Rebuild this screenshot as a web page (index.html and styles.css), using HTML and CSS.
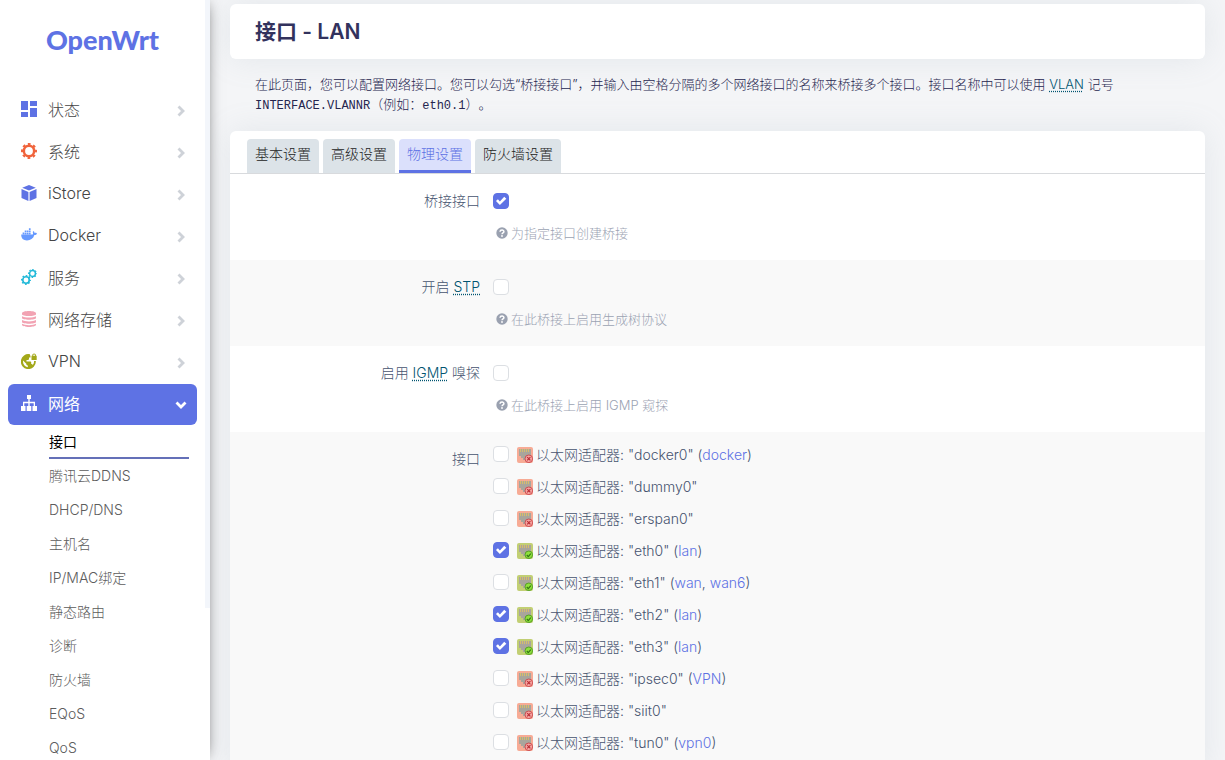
FILE: index.html
```html
<!DOCTYPE html>
<html lang="zh-CN">
<head>
  <meta charset="UTF-8">
  <meta name="viewport" content="width=device-width, initial-scale=1.0">
  <title>OpenWrt - 接口 - LAN</title>
  <link rel="stylesheet" href="styles.css">
</head>

<body>
<svg class="sprite" aria-hidden="true">
  <symbol id="i-chevron" viewBox="0 0 10 12"><path d="M2.5 1.5 7 6l-4.500 4.500" fill="none" stroke="currentColor" stroke-width="2.800"/></symbol>
  <symbol id="i-help" viewBox="0 0 12 12">
    <circle cx="6" cy="6" r="5.700" fill="currentColor"/>
    <path d="M4 4.700C4.200 2.500 8 2.600 7.900 4.700 7.800 6 6.100 5.900 6 7.300" fill="none" stroke="#fff" stroke-width="1.500"/>
    <circle cx="6" cy="9" r=".9" fill="#fff"/>
  </symbol>
  <symbol id="i-port" viewBox="0 0 16 16">
    <rect width="16" height="16" rx="2" fill="currentColor"/>
    <path d="M2 2h12v7h-2v2h-2v2H6v-2H4V9H2z" fill="#a9a59c"/>
    <path d="M3.500 2v3M5.500 2v3M7.500 2v3M9.500 2v3M11.500 2v3" stroke="#d6bd6c"/>
  </symbol>
  <symbol id="i-down" viewBox="0 0 16 16">
    <use href="#i-port"/>
    <circle cx="11.800" cy="11.800" r="3.800" fill="#f6a5a0" stroke="#c8434a" stroke-width=".9"/>
    <path d="m10.200 10.200 3.200 3.200m0-3.200-3.200 3.200" stroke="#b92b33" stroke-width="1.100"/>
  </symbol>
  <symbol id="i-up" viewBox="0 0 16 16">
    <use href="#i-port"/>
    <circle cx="11.800" cy="11.800" r="3.800" fill="#8fe03c" stroke="#4f9a22" stroke-width=".9"/>
    <path d="m9.800 12 1.500 1.600 2.500-3" fill="none" stroke="#357513" stroke-width="1.200"/>
  </symbol>
  <symbol id="i-gear" viewBox="0 0 16 16">
    <circle cx="8" cy="8" r="5.200" fill="none" stroke="currentColor" stroke-width="2.600"/>
    <circle cx="8" cy="8" r="6.900" fill="none" stroke="currentColor" stroke-width="2.200" stroke-dasharray="2.710 2.710" stroke-dashoffset="1.350"/>
  </symbol>
</svg>

<aside class="sidebar">
  <a class="brand" href="#">OpenWrt</a>
  <nav>
    <ul class="menu">
      <li><a href="#">
        <svg class="icon blue" viewBox="0 0 16 16"><path d="M0 0h7v9H0zM9 0h7v5H9zM0 11h7v5H0zM9 7h7v9H9z" fill="currentColor"/></svg>
        <span>状态</span><svg class="chevron"><use href="#i-chevron"/></svg></a></li>
      <li><a href="#">
        <svg class="icon orange"><use href="#i-gear"/></svg>
        <span>系统</span><svg class="chevron"><use href="#i-chevron"/></svg></a></li>
      <li><a href="#">
        <svg class="icon blue" viewBox="0 0 16 16"><path d="M8 0l6.800 2.700L8 5.600 1.200 2.700zM.5 4 7.400 7v9L.5 12.900zM15.500 4 8.600 7v9l6.900-3.100z" fill="currentColor"/></svg>
        <span>iStore</span><svg class="chevron"><use href="#i-chevron"/></svg></a></li>
      <li><a href="#">
        <svg class="icon docker" viewBox="0 0 16 16"><path d="M.2 7.600h11.300c.8-.6.600-1.900.2-2.700l.7-.8c.8.500 1 1 1.100 1.800.9-.1 1.800 0 2.500.5-.4 1-1.300 1.700-2.600 1.700C12.200 11.800 9.500 13.500 6 13.500 2.300 13.500.1 11.400.2 7.600zM1.600 5.500h1.700V7.200H1.600zM3.700 5.500h1.700V7.200H3.700zM5.800 5.500h1.700V7.200H5.800zM7.900 5.500h1.700V7.200H7.900zM3.700 3.400h1.700v1.700H3.700zM5.800 3.400h1.700v1.700H5.800zM7.900 3.400h1.700v1.700H7.900zM7.900 1.300h1.700v1.700H7.900z" fill="currentColor"/></svg>
        <span>Docker</span><svg class="chevron"><use href="#i-chevron"/></svg></a></li>
      <li><a href="#">
        <svg class="icon cyan" viewBox="0 0 16 16"><use href="#i-gear" x="0" y="6" width="10" height="10"/><use href="#i-gear" x="7" y="0" width="9" height="9"/></svg>
        <span>服务</span><svg class="chevron"><use href="#i-chevron"/></svg></a></li>
      <li><a href="#">
        <svg class="icon pink" viewBox="0 0 16 16"><path d="M1 2.300C1-.7 15-.7 15 2.300v1C15 5.700 1 5.700 1 3.300zM1 5.200c2.500 1.900 11.500 1.900 14 0v1.900c0 2.300-14 2.300-14 0zM1 9c2.500 1.900 11.500 1.900 14 0v1.900c0 2.300-14 2.300-14 0zM1 12.700c2.500 1.900 11.500 1.900 14 0v1.100c0 2.900-14 2.900-14 0z" fill="currentColor"/></svg>
        <span>网络存储</span><svg class="chevron"><use href="#i-chevron"/></svg></a></li>
      <li><a href="#">
        <svg class="icon olive" viewBox="0 0 16 16">
          <path d="M9 1.300A7.500 7.500 0 1 0 14.800 8H13c.1 1.700-.4 3-1.300 4-.3-.8-.7-1.100-1.500-1.100V9.200c0-.5-.3-.8-.8-.8H5.500V6.900h1.700c.5 0 .8-.3.8-.8V4.600h1.500V2.500H9zM2 7.500l3.300 3.300c0 1 .5 1.600 1.500 1.700v1.700C3.700 13.700 1.700 11 2 7.500z" fill="currentColor" fill-rule="evenodd"/>
          <path d="M10.500 2.800h.7C11.200-.4 15-.4 15 2.800h.7V7h-5.200zM12.100 2.800h2c0-1.900-2-1.900-2 0z" fill="currentColor" fill-rule="evenodd"/>
        </svg>
        <span>VPN</span><svg class="chevron"><use href="#i-chevron"/></svg></a></li>
      <li><a class="active" href="#">
        <svg class="icon" viewBox="0 0 16 16"><path d="M6 0h4v4H8.700v2.800H14V11h2v5h-4.500v-5h1.200V8.200h-4V11h1.600v5H5.700v-5h1.600V8.200h-4V11h1.200v5H0v-5h2V6.800h5.300V4H6z" fill="currentColor"/></svg>
        <span>网络</span><svg class="chevron"><use href="#i-chevron"/></svg></a>
        <ul class="submenu">
          <li><a class="current" href="#">接口</a></li>
          <li><a href="#">腾讯云DDNS</a></li>
          <li><a href="#">DHCP/DNS</a></li>
          <li><a href="#">主机名</a></li>
          <li><a href="#">IP/MAC绑定</a></li>
          <li><a href="#">静态路由</a></li>
          <li><a href="#">诊断</a></li>
          <li><a href="#">防火墙</a></li>
          <li><a href="#">EQoS</a></li>
          <li><a href="#">QoS</a></li>
        </ul>
      </li>
    </ul>
  </nav>
</aside>

<main>
  <h2>接口 - LAN</h2>
  <p class="descr">在此页面，您可以配置网络接口。您可以勾选“桥接接口”，并输入由空格分隔的多个网络接口的名称来桥接多个接口。接口名称中可以使用 <abbr>VLAN</abbr> 记号 <code>INTERFACE.VLANNR</code>（例如：<code>eth0.1</code>）。</p>

  <form class="card">
    <ul class="tabs">
      <li><a href="#">基本设置</a></li>
      <li><a href="#">高级设置</a></li>
      <li><a class="active" href="#">物理设置</a></li>
      <li><a href="#">防火墙设置</a></li>
    </ul>

    <div class="row">
      <label class="title" for="bridge">桥接接口</label>
      <div class="field">
        <input type="checkbox" id="bridge" checked>
        <div class="help"><svg><use href="#i-help"/></svg>为指定接口创建桥接</div>
      </div>
    </div>
    <div class="row">
      <label class="title" for="stp">开启 <abbr>STP</abbr></label>
      <div class="field">
        <input type="checkbox" id="stp">
        <div class="help"><svg><use href="#i-help"/></svg>在此桥接上启用生成树协议</div>
      </div>
    </div>
    <div class="row">
      <label class="title" for="igmp">启用 <abbr>IGMP</abbr> 嗅探</label>
      <div class="field">
        <input type="checkbox" id="igmp">
        <div class="help"><svg><use href="#i-help"/></svg>在此桥接上启用 IGMP 窥探</div>
      </div>
    </div>
    <div class="row">
      <span class="title">接口</span>
      <ul class="ports">
        <li><input type="checkbox" id="if0"><svg class="down"><use href="#i-down"/></svg><label for="if0">以太网适配器: "docker0" (<a href="#">docker</a>)</label></li>
        <li><input type="checkbox" id="if1"><svg class="down"><use href="#i-down"/></svg><label for="if1">以太网适配器: "dummy0"</label></li>
        <li><input type="checkbox" id="if2"><svg class="down"><use href="#i-down"/></svg><label for="if2">以太网适配器: "erspan0"</label></li>
        <li><input type="checkbox" id="if3" checked><svg class="up"><use href="#i-up"/></svg><label for="if3">以太网适配器: "eth0" (<a href="#">lan</a>)</label></li>
        <li><input type="checkbox" id="if4"><svg class="up"><use href="#i-up"/></svg><label for="if4">以太网适配器: "eth1" (<a href="#">wan</a>, <a href="#">wan6</a>)</label></li>
        <li><input type="checkbox" id="if5" checked><svg class="up"><use href="#i-up"/></svg><label for="if5">以太网适配器: "eth2" (<a href="#">lan</a>)</label></li>
        <li><input type="checkbox" id="if6" checked><svg class="up"><use href="#i-up"/></svg><label for="if6">以太网适配器: "eth3" (<a href="#">lan</a>)</label></li>
        <li><input type="checkbox" id="if7"><svg class="down"><use href="#i-down"/></svg><label for="if7">以太网适配器: "ipsec0" (<a href="#">VPN</a>)</label></li>
        <li><input type="checkbox" id="if8"><svg class="down"><use href="#i-down"/></svg><label for="if8">以太网适配器: "siit0"</label></li>
        <li><input type="checkbox" id="if9"><svg class="down"><use href="#i-down"/></svg><label for="if9">以太网适配器: "tun0" (<a href="#">vpn0</a>)</label></li>
      </ul>
    </div>
  </form>
</main>
</body>
</html>
```

FILE: styles.css
```css
* {
  box-sizing: border-box;
}
body {
  display: flex;
  height: 100vh;
  margin: 0;
  overflow: hidden;
  background: #f4f5f7;
  color: #46536f;
  font-family: Inter, "Noto Sans CJK SC", sans-serif;
  font-size: 14px;
  font-weight: 300;
}
ul {
  margin: 0;
  padding: 0;
  list-style: none;
}
a {
  color: #5e72e4;
  text-decoration: none;
}
abbr {
  color: #005470;
  text-decoration: underline dotted;
  text-underline-offset: 2px;
}
svg {
  flex: none;
}
.sprite {
  position: absolute;
  width: 0;
  height: 0;
}

/* sidebar */
.sidebar {
  position: relative;
  flex: none;
  width: 210px;
  height: 100%;
  background: #fff;
  box-shadow: rgba(0, 0, 0, .75) 0 0 15px -5px;
}
/* scrollbar thumb */
.sidebar::after {
  content: "";
  position: absolute;
  top: 0;
  right: 0;
  width: 5px;
  height: 80%;
  background: #f3f6fb;
}
.brand {
  display: block;
  padding: 20px 5px 30px 0;
  text-align: center;
  font-family: Lato, sans-serif;
  font-size: 27px;
  font-weight: 900;
  line-height: 40px;
}
.menu {
  padding: 0 13px 0 8px;
}
.menu > li > a {
  display: flex;
  align-items: center;
  height: 41px;
  margin-bottom: 1px;
  padding: 0 11px 0 13px;
  border-radius: 6px;
  color: #454545;
  font-size: 16px;
}
.menu > li > a > span {
  flex: 1;
  padding: 0 0 4px 11px;
}
.menu .icon {
  width: 16px;
  height: 16px;
  margin-bottom: 3px;
}
.chevron {
  width: 10px;
  height: 12px;
  color: #ced2d8;
}
.menu > li > a.active {
  margin: 0;
  background: #5e72e4;
  color: #fff;
  font-weight: 400;
}
.active .chevron {
  color: #fff;
  transform: rotate(90deg);
}
.menu .blue { color: #5e72e4; }
.menu .orange { color: #f0643c; }
.menu .docker { color: #6699ff; }
.menu .cyan { color: #22b9d8; }
.menu .pink { color: #f2a3b3; }
.menu .olive { color: #a3a819; }

.submenu {
  padding: 0 8px 0 41px;
}
.submenu a {
  display: block;
  height: 34px;
  color: #5c5c5c;
  line-height: 34px;
}
.submenu .current {
  color: #000;
  font-weight: 400;
  box-shadow: inset 0 -2px #6470b8;
}

/* content */
main {
  flex: 1;
  min-width: 0;
  padding: 4px 20px 0;
}
h2, .card {
  margin: 0;
  border-radius: 6px;
  background: #fff;
  box-shadow: 0 0 32px rgba(136, 152, 170, .15);
}
h2 {
  padding: 12px 25px;
  color: #32325d;
  font-size: 21px;
  font-weight: 600;
  line-height: 31px;
}
.descr {
  margin: 0;
  padding: 15px 25px;
  color: #25254f;
  font-size: 13px;
  line-height: 20px;
  text-spacing-trim: space-all;
}
.descr code {
  font-family: "Liberation Mono", monospace;
  font-size: 12px;
}
.tabs {
  display: flex;
  gap: 4px;
  padding: 8px 17px 0;
  border-bottom: 1px solid #d8dadd;
}
.tabs a {
  display: block;
  height: 34px;
  padding: 0 8px;
  border-radius: 4px 4px 0 0;
  background: #dce3e8;
  color: #222;
  line-height: 30px;
}
.tabs .active {
  border-bottom: 3px solid #5e72e4;
  background: #dbe0fc;
  color: #5e72e4;
}
.row {
  display: flex;
  gap: 13px;
  min-height: 86px;
}
.row:nth-child(odd) {
  background: #f9f9f9;
}
.title {
  width: 250px;
  padding-top: 16px;
  text-align: right;
  line-height: 22px;
}
.field {
  padding-top: 19px;
}
input {
  flex: none;
  display: block;
  appearance: none;
  width: 16px;
  height: 16px;
  margin: 0;
  border: 1px solid #dcdfe3;
  border-radius: 4px;
  background: #fff;
}
input:checked {
  border-color: #5e72e4;
  background: #5e72e4;
}
input:checked::after {
  content: "";
  display: block;
  height: 14px;
  background: #fff;
  clip-path: polygon(14% 50%, 28% 38%, 42% 53%, 73% 20%, 88% 34%, 42% 79%);
}
.help {
  display: flex;
  align-items: center;
  gap: 3px;
  margin: 14px 0 0 3px;
  color: #9ba3b3;
  font-size: 13px;
  line-height: 20px;
}
.help svg {
  width: 12px;
  height: 12px;
  color: #9aa1b0;
}
.ports {
  padding: 6px 0 16px;
}
.ports li {
  display: flex;
  align-items: center;
  height: 32px;
}
.ports svg {
  width: 16px;
  height: 16px;
  margin: 2px 3px 0 8px;
}
.down { color: #f7ab95; }
.up { color: #c2cf74; }
```
